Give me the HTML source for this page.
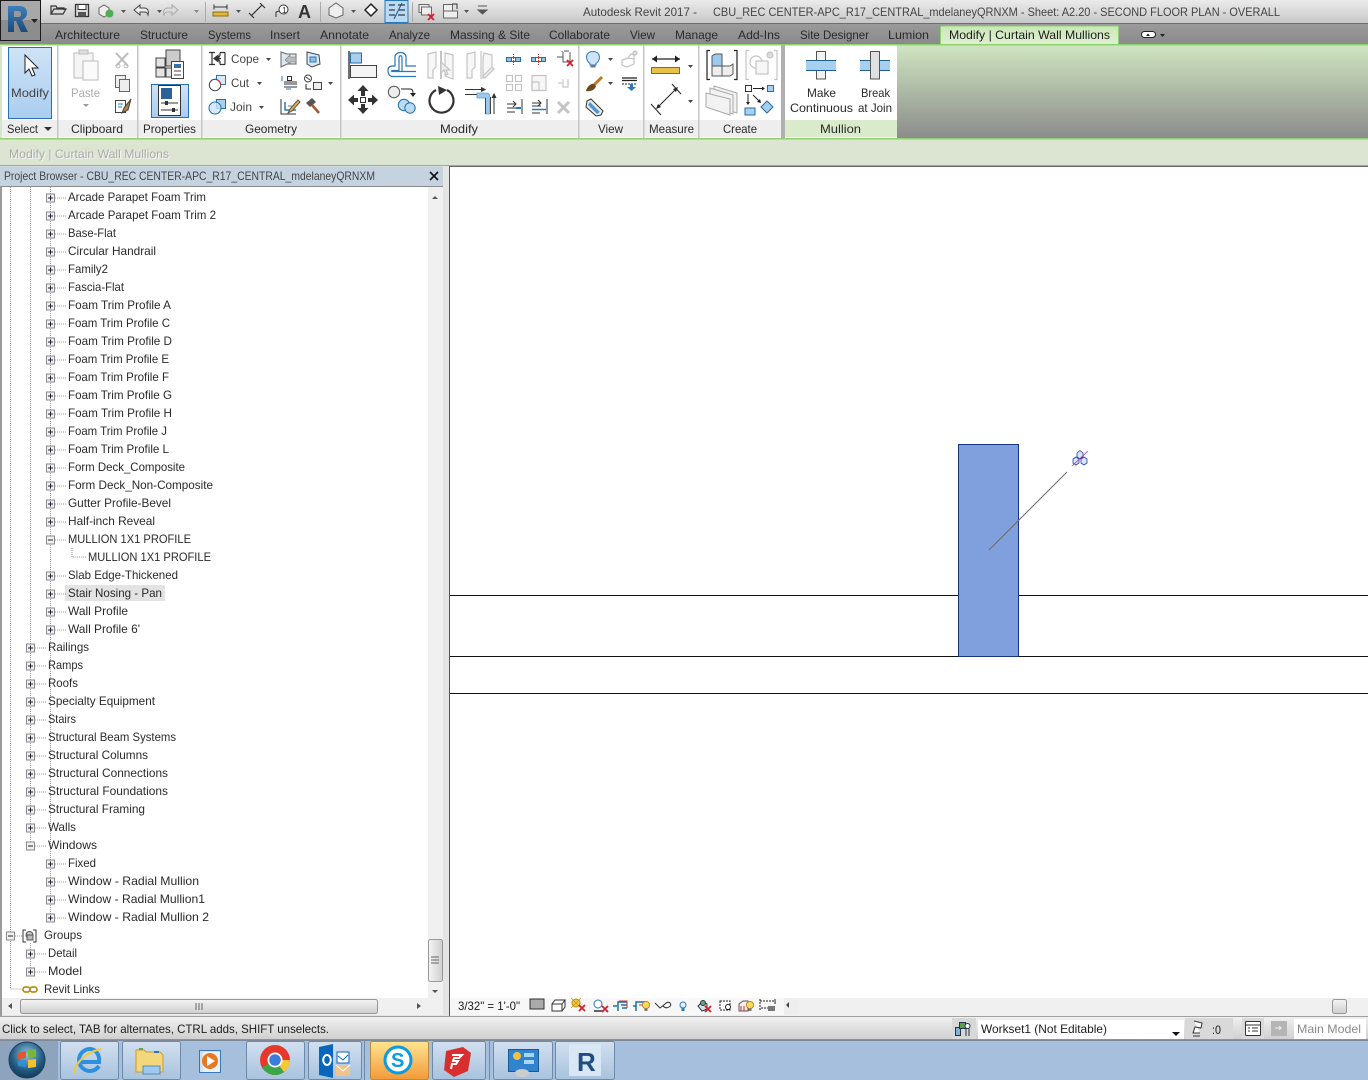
<!DOCTYPE html>
<html><head><meta charset="utf-8"><title>Revit</title>
<style>
html,body{margin:0;padding:0;background:#fff;width:1368px;height:1080px;overflow:hidden}
svg{display:block}
text{font-family:"Liberation Sans",sans-serif;font-size:12px;fill:#2a2a2a}
.t{fill:#1c1c1c}
.g{fill:#aaa}
.p{fill:#444}
.i{fill:none;stroke:#333;stroke-width:1.2}
.b{fill:#a9cfee;stroke:#1f6fa8;stroke-width:1}
.w{fill:#eee;stroke:#666;stroke-width:1}
.l{fill:none;stroke:#c4c4c4;stroke-width:1.2}
.d{stroke:#999;stroke-width:1;stroke-dasharray:1 1;fill:none}
</style></head><body>
<svg width="1368" height="1080" viewBox="0 0 1368 1080" xmlns="http://www.w3.org/2000/svg" shape-rendering="geometricPrecision">
<defs>
<linearGradient id="tb" x1="0" y1="0" x2="0" y2="1"><stop offset="0" stop-color="#ebebeb"/><stop offset="1" stop-color="#c6c6c6"/></linearGradient>
<linearGradient id="tab" x1="0" y1="0" x2="0" y2="1"><stop offset="0" stop-color="#9a9a9a"/><stop offset="1" stop-color="#8a8a8a"/></linearGradient>
<linearGradient id="rg" x1="0" y1="0" x2="0" y2="1"><stop offset="0" stop-color="#cfe5c0"/><stop offset="1" stop-color="#8c8c8c"/></linearGradient>
<linearGradient id="at" x1="0" y1="0" x2="0" y2="1"><stop offset="0" stop-color="#cbe6b8"/><stop offset="1" stop-color="#dff0d2"/></linearGradient>
<linearGradient id="st" x1="0" y1="0" x2="0" y2="1"><stop offset="0" stop-color="#f2f2f2"/><stop offset="1" stop-color="#cfcfcf"/></linearGradient>
<linearGradient id="rl" x1="0" y1="0" x2="0" y2="1"><stop offset="0" stop-color="#3f7fbd"/><stop offset="1" stop-color="#1c4a78"/></linearGradient>
<linearGradient id="sel" x1="0" y1="0" x2="0" y2="1"><stop offset="0" stop-color="#cfe3f6"/><stop offset="1" stop-color="#a9cdef"/></linearGradient>
<linearGradient id="btn" x1="0" y1="0" x2="0" y2="1"><stop offset="0" stop-color="#d2e0f0"/><stop offset="1" stop-color="#a8c2de"/></linearGradient>
<linearGradient id="sk" x1="0" y1="0" x2="0" y2="1"><stop offset="0" stop-color="#ffe58f"/><stop offset="1" stop-color="#f29a3a"/></linearGradient>
<linearGradient id="sb" x1="0" y1="0" x2="0" y2="1"><stop offset="0" stop-color="#f4f4f4"/><stop offset="1" stop-color="#cfcfcf"/></linearGradient>
<linearGradient id="sv" x1="0" y1="0" x2="1" y2="0"><stop offset="0" stop-color="#f4f4f4"/><stop offset="1" stop-color="#cfcfcf"/></linearGradient>
<radialGradient id="orb" cx=".5" cy=".35" r=".7"><stop offset="0" stop-color="#8fc4de"/><stop offset=".6" stop-color="#245d85"/><stop offset="1" stop-color="#0f3450"/></radialGradient>
<g id="pl"><rect x="0.5" y="0.5" width="8" height="8" fill="#f0f0f0" stroke="#8a8a8a"/><path d="M2 4.500h5M4.500 2v5" stroke="#223" fill="none"/></g>
<g id="mi"><rect x="0.5" y="0.5" width="8" height="8" fill="#f0f0f0" stroke="#8a8a8a"/><path d="M2 4.500h5" stroke="#223" fill="none"/></g>
<g id="x"><path d="M0 0l6 6M6 0l-6 6" stroke="#d3202a" stroke-width="1.8" fill="none"/></g>
<g id="bulb"><circle cx="4" cy="4" r="3.600" fill="#ffd75a" stroke="#a87b10" stroke-width=".8"/><rect x="2.500" y="7.500" width="3" height="2.500" fill="#777"/></g>
</defs>

<!-- title bar -->
<rect width="1368" height="24" fill="url(#tb)"/>
<rect y="23" width="1368" height="1" fill="#6f6f6f"/>
<rect y="24" width="1368" height="20" fill="url(#tab)"/>

<!-- application button -->
<rect x="0.5" y="0.5" width="40" height="40" fill="#8d8d8d" stroke="#1a1a1a"/>
<rect x="1" y="1" width="39" height="19" fill="#a8a8a8"/>
<path d="M8 6h11c6 0 8 3 8 7 0 3-2 6-5 7l6 12h-7l-5-11h-2v11H8z" fill="url(#rl)"/>
<path d="M14 11v6h4c2 0 3-1 3-3s-1-3-3-3z" fill="#999"/>
<path d="M31 19h7l-3.500 4z" fill="#222"/>

<!-- QAT icons -->
<path d="M51 14V6h5l1 2h7v2M51 14l3-5h12l-3 5z" class="i"/>
<g><rect x="75.500" y="4.500" width="13" height="12" fill="#ddd" stroke="#333" stroke-width="1.300"/><rect x="78" y="4.500" width="8" height="5" fill="#fff" stroke="#333"/><rect x="78" y="12" width="8" height="4.500" fill="#555"/></g>
<g><path d="M99 8l5-3 5 3v6l-5 3-5-3z" class="w"/><circle cx="109.500" cy="13.500" r="4" fill="#4caf50"/></g>
<path d="M121 10h5l-2.500 3z" fill="#555"/>
<path d="M134 10l6-5v3h4c4 0 5 3 4 7-1-3-2-3-4-3h-4v3z" fill="#eee" stroke="#444"/>
<path d="M157 10h5l-2.500 3z" fill="#555"/>
<path d="M178 10l-6-5v3h-4c-4 0-5 3-4 7 1-3 2-3 4-3h4v3z" fill="#ddd" stroke="#aaa"/>
<path d="M194 10h5l-2.500 3z" fill="#888"/>
<rect x="205" y="2" width="1" height="20" fill="#aaa"/>
<g><path d="M214 7h13M214 4.500v5M227 4.500v5" stroke="#333" fill="none"/><rect x="213" y="12" width="15" height="4" fill="#e0b93a" stroke="#8a6d10"/></g>
<path d="M236 10h5l-2.500 3z" fill="#555"/>
<g stroke="#333" fill="none" stroke-width="1.200"><path d="M251 16l11-11M249 13l5 5M260 3l5 5"/></g>
<g><circle cx="283.500" cy="9.500" r="4.500" fill="#fff" stroke="#333"/><path d="M279 11l-3 1v5" stroke="#333" fill="none"/><text x="282" y="13" style="font-size:8px">1</text></g>
<text x="298" y="18" style="font-size:18px;font-weight:bold;fill:#333">A</text>
<rect x="320" y="2" width="1" height="20" fill="#aaa"/>
<path d="M329 8l7-5 7 5v7l-7 3-7-3z" class="w"/>
<path d="M351 10h5l-2.500 3z" fill="#555"/>
<path d="M365 10l6-6 6 6-6 6z" fill="#fff" stroke="#222" stroke-width="1.500"/>
<rect x="385" y="0.500" width="23" height="22" fill="#bcd9f2" stroke="#2a78b8"/>
<path d="M389 5h6M389 10h6M389 15h6M398 5h7M399 10h6M398 15h7" stroke="#2c3e50" stroke-width="1.200" fill="none"/><path d="M394 19l8-16" stroke="#1c4f8a"/>
<rect x="412" y="2" width="1" height="20" fill="#aaa"/>
<g><rect x="419" y="4.500" width="10" height="8" class="w"/><rect x="421.500" y="7" width="10" height="8" class="w"/><use href="#x" x="428" y="14"/></g>
<g><rect x="443.500" y="4.500" width="9" height="7" class="w"/><rect x="443.500" y="11" width="14" height="7" class="w"/><path d="M452 4h5v5" stroke="#333" fill="none"/></g>
<path d="M464 10h5l-2.500 3z" fill="#555"/>
<path d="M478 6h9M478 10h9l-4.500 4z" fill="#555" stroke="#555"/>

<text x="583" y="16" textLength="114" lengthAdjust="spacingAndGlyphs" class="p">Autodesk Revit 2017 -</text>
<text x="713" y="16" textLength="567" lengthAdjust="spacingAndGlyphs" class="p">CBU_REC CENTER-APC_R17_CENTRAL_mdelaneyQRNXM - Sheet: A2.20 - SECOND FLOOR PLAN - OVERALL</text>

<!-- tabs -->
<g class="t">
<text x="55" y="39" textLength="65" lengthAdjust="spacingAndGlyphs">Architecture</text>
<text x="140" y="39" textLength="48" lengthAdjust="spacingAndGlyphs">Structure</text>
<text x="208" y="39" textLength="43" lengthAdjust="spacingAndGlyphs">Systems</text>
<text x="270" y="39" textLength="30" lengthAdjust="spacingAndGlyphs">Insert</text>
<text x="320" y="39" textLength="49" lengthAdjust="spacingAndGlyphs">Annotate</text>
<text x="389" y="39" textLength="41" lengthAdjust="spacingAndGlyphs">Analyze</text>
<text x="450" y="39" textLength="80" lengthAdjust="spacingAndGlyphs">Massing &amp; Site</text>
<text x="549" y="39" textLength="61" lengthAdjust="spacingAndGlyphs">Collaborate</text>
<text x="630" y="39" textLength="25" lengthAdjust="spacingAndGlyphs">View</text>
<text x="675" y="39" textLength="43" lengthAdjust="spacingAndGlyphs">Manage</text>
<text x="738" y="39" textLength="42" lengthAdjust="spacingAndGlyphs">Add-Ins</text>
<text x="800" y="39" textLength="69" lengthAdjust="spacingAndGlyphs">Site Designer</text>
<text x="888" y="39" textLength="41" lengthAdjust="spacingAndGlyphs">Lumion</text>
</g>
<path d="M940.500 45V27q0-1 1-1h176q1 0 1 1v18z" fill="url(#at)" stroke="#8fd070"/>
<text x="949" y="39" textLength="161" lengthAdjust="spacingAndGlyphs" class="t">Modify | Curtain Wall Mullions</text>
<rect x="1141.500" y="31.500" width="14" height="6" rx="3" fill="#fff" stroke="#222"/><path d="M1146 36h4l-2-2.500z" fill="#222"/><path d="M1160 34h5l-2.500 3z" fill="#222"/>

<!-- ribbon -->
<rect y="45" width="1368" height="93" fill="url(#rg)"/>
<rect y="44" width="1368" height="1.500" fill="#8fd070"/>
<rect y="138" width="1368" height="1.500" fill="#8fd070"/>
<rect x="0" y="45" width="2" height="93" fill="#d5e5ca"/>
<rect x="781" y="45" width="4" height="93" fill="#b0b0b0"/>
<rect x="2" y="45.500" width="779" height="92.500" fill="#fff"/>
<rect x="785" y="45.500" width="112" height="92.500" fill="#fff"/>
<rect x="2" y="120" width="779" height="17" fill="#eeeeee"/>
<rect x="785" y="120" width="112" height="17" fill="#d9ebca"/>
<g fill="#c6c6c6">
<rect x="57" y="45" width="1.500" height="93"/><rect x="137" y="45" width="1.500" height="93"/><rect x="201" y="45" width="1.500" height="93"/><rect x="340" y="45" width="1.500" height="93"/><rect x="578" y="45" width="1.500" height="93"/><rect x="643" y="45" width="1.500" height="93"/><rect x="698" y="45" width="1.500" height="93"/>
</g>

<!-- panel labels -->
<g class="p">
<text x="7" y="133" textLength="31" lengthAdjust="spacingAndGlyphs">Select</text>
<path d="M44 127h8l-4 4z" fill="#333"/>
<text x="71" y="133" textLength="52" lengthAdjust="spacingAndGlyphs">Clipboard</text>
<text x="143" y="133" textLength="53" lengthAdjust="spacingAndGlyphs">Properties</text>
<text x="245" y="133" textLength="52" lengthAdjust="spacingAndGlyphs">Geometry</text>
<text x="440" y="133" textLength="38" lengthAdjust="spacingAndGlyphs">Modify</text>
<text x="598" y="133" textLength="25" lengthAdjust="spacingAndGlyphs">View</text>
<text x="649" y="133" textLength="45" lengthAdjust="spacingAndGlyphs">Measure</text>
<text x="723" y="133" textLength="34" lengthAdjust="spacingAndGlyphs">Create</text>
<text x="820" y="133" textLength="41" lengthAdjust="spacingAndGlyphs">Mullion</text>
</g>

<!-- Select -->
<rect x="8.500" y="47.500" width="43" height="71" fill="url(#sel)" stroke="#2a6fb0"/>
<path d="M25 55v18l4-4 3 7 3-1-3-7h6z" fill="#fff" stroke="#222"/>
<text x="11" y="97" textLength="38" lengthAdjust="spacingAndGlyphs" class="p">Modify</text>

<!-- Clipboard -->
<g class="l"><rect x="74" y="53" width="19" height="25" fill="#f4f4f4"/><rect x="83" y="61" width="15" height="19" fill="#fafafa"/><rect x="79" y="50" width="9" height="4" fill="#ddd"/></g>
<text x="71" y="97" textLength="29" lengthAdjust="spacingAndGlyphs" class="g">Paste</text>
<path d="M83 104h6l-3 3z" fill="#999"/>
<path d="M116 53l12 13M128 53l-12 13" stroke="#bbb" stroke-width="2" fill="none"/>
<circle cx="118" cy="66" r="2" fill="none" stroke="#bbb"/><circle cx="126" cy="66" r="2" fill="none" stroke="#bbb"/>
<rect x="115.500" y="75.500" width="10" height="12" class="w"/><rect x="119.500" y="79.500" width="10" height="12" class="w"/>
<g><rect x="115.500" y="100.500" width="10" height="12" fill="#fff" stroke="#444"/><path d="M118 104h5M118 107h4" stroke="#2a78b8"/><path d="M131 99l-7 9-2 5 6-3z" fill="#b08040" stroke="#444"/></g>

<!-- Properties -->
<g stroke="#444" fill="#e4e4e4"><path d="M156 58h9v9h-9zM156 68h9v9h-9zM166 68h8v9h-8z"/><path d="M166 50h14v16h-14z" fill="#ccc"/></g>
<rect x="171.500" y="61.500" width="12" height="17" fill="#fff" stroke="#444"/><rect x="174" y="64" width="7" height="4" fill="#3a6ea5"/><path d="M174 71h7M174 75h7" stroke="#444"/>
<rect x="151.500" y="84.500" width="37" height="33" fill="url(#sel)" stroke="#2a6fb0"/>
<rect x="158.500" y="85.500" width="22" height="30" fill="#fff" stroke="#333"/>
<rect x="161" y="88" width="11" height="11" fill="#2f6198"/><path d="M161 103h17M161 110h17" stroke="#333"/><rect x="165" y="101" width="3" height="4" fill="#333"/><rect x="172" y="108" width="3" height="4" fill="#333"/>

<!-- Geometry -->
<g class="i"><path d="M209 52.500h6M212 52.500v12M209 64.500h6M220 52.500h5M220 64.500h5M220 52.500v3l-2 3 2 3v3M225 52.500v12M214 58.500h7"/><path d="M214 58.500l4-3v6z" fill="#333"/></g>
<text x="231" y="63" textLength="28" lengthAdjust="spacingAndGlyphs" class="p">Cope</text><path d="M266 58h5l-2.500 3z" fill="#444"/>
<g><rect x="216.500" y="75.500" width="9" height="9" fill="#d8e9f7" stroke="#2a78b8"/><circle cx="215" cy="85" r="5.700" fill="#fff" stroke="#444"/><path d="M216 79.500a5.500 5.500 0 0 1 4.500 5" stroke="#d3202a" fill="none"/></g>
<text x="231" y="87" textLength="18" lengthAdjust="spacingAndGlyphs" class="p">Cut</text><path d="M257 82h5l-2.500 3z" fill="#444"/>
<g><rect x="216.500" y="99.500" width="9" height="9" class="b"/><circle cx="215" cy="108" r="6" fill="#cfe3f6" fill-opacity=".8" stroke="#1f6fa8"/></g>
<text x="230" y="111" textLength="22" lengthAdjust="spacingAndGlyphs" class="p">Join</text><path d="M259 106h5l-2.500 3z" fill="#444"/>
<g><path d="M281 52l6 2h9v10h-9l-6 3z" fill="#dce9f5" stroke="#666"/><path d="M296 57h-6v-2l-5 5 5 4v-2h6z" fill="#bbb" stroke="#777" stroke-width=".6"/></g>
<path d="M307 52l12 3 1 9-8 3-5-3z" fill="#dce9f5" stroke="#444"/><rect x="310" y="57" width="6" height="5" fill="#8fbfe6" stroke="#2a78b8"/>
<g stroke="#333" fill="none"><rect x="287.500" y="76.500" width="4" height="4"/><path d="M284 82h13M284 84h13M284 87h13" stroke-width=".9"/><path d="M282 76v5" stroke="#2a78b8"/><path d="M286 89h5" stroke="#2a78b8"/></g>
<g><circle cx="308" cy="78.500" r="3.500" fill="#fff" stroke="#444"/><path d="M306 77l4 3" stroke="#444"/><rect x="313.500" y="82.500" width="8" height="7" fill="#eee" stroke="#444"/><path d="M306 84v5h5" stroke="#222" fill="none"/></g>
<path d="M328 82h5l-2.500 3z" fill="#444"/>
<g><path d="M281 99v15h15" stroke="#333" fill="none"/><path d="M285 102v8h11M289 106v0" stroke="#2a78b8" stroke-width="1.500" fill="none"/><path d="M288 106h8" stroke="#777"/><path d="M298 100l-8 9-2 4 4-2 8-9z" fill="#e8b23a" stroke="#555"/></g>
<g><path d="M306 103l6-5 4 4-6 5z" fill="#555"/><path d="M312 105l7 8" stroke="#a05a2c" stroke-width="2.500"/></g>

<!-- Modify icons row 1 -->
<g><path d="M349 51v28" stroke="#222" stroke-width="1.300"/><rect x="350.500" y="53" width="11" height="10" class="b"/><rect x="350.500" y="65.500" width="26" height="12" fill="#f4f4f4" stroke="#444"/></g>
<path d="M388 70c0-3 2-4 5-4h2v-9c0-6 11-6 11 0v9h10M416 76.500h-23c-3 0-5-2-5-6.500M393 71.500h23M393 71.500c-2 0-2-1 0-1h6V58c0-3 3-3 3 0v13" fill="none" stroke="#2a78b8" stroke-width="1.200"/>
<g class="l"><path d="M428 54l8-2v15l-3 3v8h-5z" fill="#f7f7f7"/><path d="M441 51v28" stroke-width="2"/><path d="M445 53l8 2v24l-8-3z" fill="#f7f7f7"/><path d="M441 62v11l3-3 2 5 2-1-2-4h4z" fill="#eee"/></g>
<g class="l"><path d="M467 54l8-2v15l-3 3v8h-5z" fill="#f7f7f7"/><path d="M481 51v28"/><path d="M484 53l8 2v14l-9 9v-20z" fill="#f7f7f7"/><path d="M483 76l9-9 2 2-9 9z" fill="#eee"/></g>
<!-- small top row -->
<g stroke="#1f6fa8" fill="#8fc3ea"><rect x="506.500" y="57.500" width="5" height="4"/><rect x="515.500" y="57.500" width="5" height="4"/><rect x="511.500" y="57.500" width="4" height="4" fill="#fff"/></g><path d="M513.500 54v11" stroke="#b33" stroke-dasharray="1 1"/>
<g stroke="#1f6fa8"><rect x="531.500" y="57.500" width="4" height="4" fill="#8fc3ea"/><rect x="541.500" y="57.500" width="4" height="4" fill="#8fc3ea"/><path d="M535 57.500h6M535 61.500h6" fill="none"/></g><path d="M538.500 54v11" stroke="#b33" stroke-dasharray="1 1"/>
<g><path d="M557 57h6M563 52v10h7V52M564 51h5M562 51v1" stroke="#555" fill="none"/><use href="#x" x="567" y="60"/></g>
<!-- row 2 small grid -->
<g class="l"><rect x="506.500" y="75.500" width="6" height="6"/><rect x="515.500" y="75.500" width="6" height="6"/><rect x="506.500" y="84.500" width="6" height="6"/><rect x="515.500" y="84.500" width="6" height="6"/></g>
<g class="l"><rect x="532" y="75.500" width="14" height="15" fill="#f6f6f6"/><rect x="532" y="82" width="7" height="8.500"/></g>
<path d="M558 83h4M563 79v8h5v-8" class="l"/>
<!-- move -->
<g fill="#333"><path d="M363 85l5.500 6H365v5h-4v-5h-3.500zM363 114l5.500-6H365v-4h-4v4h-3.500zM348 100l6-5.500v3.500h4v4h-4v3.500zM378 100l-6-5.500v3.500h-4v4h4v3.500z"/><rect x="360.500" y="97.500" width="5" height="5" fill="#fff" stroke="#333"/></g>
<!-- copy -->
<g><circle cx="394" cy="92" r="5.700" fill="#eee" stroke="#555"/><path d="M401 89h9q3 0 3 4" stroke="#222" fill="none"/><path d="M410 93h6l-3 4z" fill="#222"/><circle cx="404" cy="105" r="5.700" fill="#bcd9f2" stroke="#1f6fa8"/><circle cx="410" cy="108" r="5.200" fill="#bcd9f2" stroke="#1f6fa8"/></g>
<!-- rotate -->
<path d="M436 90a12 12 0 1 0 11 0" fill="none" stroke="#333" stroke-width="2.200"/><path d="M438 86l9 4-8 5z" fill="#333"/>
<!-- trim -->
<g fill="none" stroke="#333"><path d="M465 89.500h18M465 94.500h12"/><path d="M481 87.500l4 2-4 2" fill="#333"/><path d="M494 114V96"/><path d="M492 98l2-4 2 4" fill="#333"/></g>
<path d="M477 93h9q4 0 4 4v17h-4.500V98h-8.500z" fill="#9cc9ee" stroke="#5f9ccc" stroke-width=".8"/>
<path d="M485.500 98v16M490.500 97v17" stroke="#444"/>
<!-- row 3 small -->
<g stroke="#333" fill="none"><path d="M507 104h9M507 108h9M513 101l3 3-3 3M522 99v15M507 112h8"/><path d="M516 108h5" stroke="#2a78b8" stroke-width="2"/></g>
<g stroke="#333" fill="none"><path d="M532 103h9M532 106h9M538 100l3 3-3 3M547 99v15M532 113h8"/><path d="M532 109.500h14M532 112h0" stroke="#2a78b8" stroke-width="1.500"/></g>
<path d="M558 102l11 11M569 102l-11 11" stroke="#c4c4c4" stroke-width="3"/>

<!-- View panel -->
<g><path d="M593 51.500c-8 0-8 9-3 12v1.500h6v-1.500c5-3 5-12-3-12z" fill="#cfe3f6" stroke="#2a78b8"/><rect x="590.500" y="65" width="5" height="2.500" fill="#777"/></g>
<path d="M608 58h5l-2.500 3z" fill="#444"/>
<g class="l"><path d="M622 60l6-2 6 1v5l-7 3-5-2zM628 58l3-4 3 1v4"/><circle cx="635" cy="53" r="2" fill="#ddd"/></g>
<g><path d="M602 77l-8 8" stroke="#c07a20" stroke-width="3"/><path d="M594 84c-2-1-7 2-8 7 4 1 9-1 10-5z" fill="#6a4a20"/></g>
<path d="M608 82h5l-2.500 3z" fill="#444"/>
<g stroke="#222" fill="none"><path d="M622 78h15M622 80.500h15" stroke-width="1.300"/><path d="M622 84h15" stroke-dasharray="2 1"/></g><path d="M630 84h3v3h3l-4.500 4-4.500-4h3z" fill="#2a78b8"/>
<g><path d="M587 101l4-2 12 12-2 4-5 1-10-9z" fill="#eee" stroke="#333"/><path d="M590 102l10 10-3 2-9-9z" fill="#4f95d8"/></g>

<!-- Measure -->
<path d="M652 59h28" stroke="#222" fill="none" stroke-width="1.200"/><path d="M652 59l5-3.500v7zM680 59l-5-3.500v7z" fill="#222"/>
<rect x="651.500" y="67.500" width="28" height="6" fill="#e7c14a" stroke="#8a6d10"/>
<path d="M688 65h5l-2.500 3z" fill="#444"/>
<path d="M657 108l20-20M651 104l10 11M672 84l9 10" stroke="#222" fill="none"/>
<path d="M656 109l2-5 3 3zM678 87l-5 2 3 3z" fill="#222"/>
<path d="M688 100h5l-2.500 3z" fill="#444"/>

<!-- Create -->
<path d="M710 50.500h-3v29h3M734 50.500h3v29h-3" fill="none" stroke="#222" stroke-width="1.200"/>
<path d="M712 56l3-2h7v12h-10z" fill="#9cc9ee" stroke="#555"/><path d="M712 66h10v10h-10zM722 66h8l3-2v10l-3 2h-8z" fill="#eee" stroke="#555"/>
<g class="l"><path d="M749 50.500h-3v29h3M774 50.500h3v29h-3"/><circle cx="756" cy="62" r="6"/><rect x="756" y="61" width="12" height="13" fill="#f6f6f6"/><circle cx="770" cy="55" r="3" fill="#ddd"/></g>
<g fill="#f2f2f2" stroke="#aaa"><path d="M714 86l23 7v20l-23-7z"/><path d="M710 88l23 7v19l-23-7z"/><path d="M706 93v14l24 8V99z"/></g>
<rect x="745.500" y="85.500" width="6" height="6" fill="#fff" stroke="#333"/><path d="M753 88.500h10" stroke="#222"/><path d="M765 88.500l-3-2v4z" fill="#222"/><rect x="767.500" y="85.500" width="6" height="6" class="b"/>
<path d="M748 94v9M753 95l6 6" stroke="#222" fill="none"/><path d="M746 102h4l-2 3zM761 103l-4-1 3-3z" fill="#222"/>
<rect x="745" y="108" width="10" height="7" class="b"/><path d="M767 101l6 6-6 6-6-6z" class="b"/>

<!-- Mullion -->
<rect x="816.500" y="51.500" width="9" height="9" fill="#f2f2f2" stroke="#555"/><rect x="816.500" y="70" width="9" height="9" fill="#f2f2f2" stroke="#555"/>
<rect x="806" y="61" width="30" height="9" fill="#a9cfee"/><path d="M806 60.500h30M806 70.500h30" stroke="#1f5f90" fill="none"/>
<rect x="860" y="60.500" width="11" height="9.500" fill="#a9cfee"/><rect x="879" y="60.500" width="11" height="9.500" fill="#a9cfee"/><path d="M860 60.500h10M860 70.500h10M880 60.500h10M880 70.500h10" stroke="#1f5f90" fill="none"/>
<rect x="870.500" y="51.500" width="9" height="27.500" fill="#e0e0e0" stroke="#555"/>
<g class="p">
<text x="807" y="97" textLength="29" lengthAdjust="spacingAndGlyphs">Make</text>
<text x="790" y="112" textLength="63" lengthAdjust="spacingAndGlyphs">Continuous</text>
<text x="861" y="97" textLength="29" lengthAdjust="spacingAndGlyphs">Break</text>
<text x="858" y="112" textLength="34" lengthAdjust="spacingAndGlyphs">at Join</text>
</g>

<!-- options bar -->
<rect y="139.500" width="1368" height="26.500" fill="#dbe5d2"/>
<text x="10" y="159" textLength="160" lengthAdjust="spacingAndGlyphs" style="fill:#f5f5f5">Modify | Curtain Wall Mullions</text>
<text x="9" y="158" textLength="160" lengthAdjust="spacingAndGlyphs" class="g">Modify | Curtain Wall Mullions</text>
<rect y="165.500" width="1368" height="1.500" fill="#6a6a6a"/>

<!-- project browser -->
<rect x="0" y="166" width="449" height="850" fill="#e4e4e4"/>
<rect x="0" y="166.500" width="443" height="19.500" fill="#c5d3e1"/>
<text x="4" y="180" textLength="371" lengthAdjust="spacingAndGlyphs" class="p">Project Browser - CBU_REC CENTER-APC_R17_CENTRAL_mdelaneyQRNXM</text>
<path d="M430 172l8 8M438 172l-8 8" stroke="#111" stroke-width="1.600"/>
<rect x="0" y="186" width="2" height="830" fill="#9a9a9a"/>
<rect x="2" y="186" width="441" height="1" fill="#8a8a8a"/>
<rect x="2" y="187" width="426" height="811" fill="#fff"/>
<rect x="428" y="187" width="15" height="811" fill="#f0f0f0"/>
<rect x="428.500" y="939.500" width="14" height="42" rx="2" fill="url(#sv)" stroke="#979797"/>
<path d="M431 957h8M431 960h8M431 963h8" stroke="#666"/>
<path d="M432 199l3-3 3 3zM432 990h6l-3 3z" fill="#555"/>
<rect x="2" y="998" width="441" height="17" fill="#f0f0f0"/>
<rect x="20.500" y="999.500" width="357" height="14" rx="2" fill="url(#sb)" stroke="#979797"/>
<path d="M196 1003v7M199 1003v7M202 1003v7" stroke="#666"/>
<path d="M12 1003v6l-4-3zM417 1003v6l4-3z" fill="#555"/>

<!-- tree lines -->
<path class="d" d="M10.500 187V989M30.500 187V845M50.500 187V917M30.500 935V971M10.500 989H22"/>
<path class="d" d="M72 548V557H86"/>

<g id="tree">
<rect x="65" y="585" width="100" height="16" fill="#e3e3e3"/>
<path class="d" d="M55 198H66M55 216H66M55 234H66M55 252H66M55 270H66M55 288H66M55 306H66M55 324H66M55 342H66M55 360H66M55 378H66M55 396H66M55 414H66M55 432H66M55 450H66M55 468H66M55 486H66M55 504H66M55 522H66M55 540H66M55 576H66M55 594H66M55 612H66M55 630H66M55 864H66M55 882H66M55 900H66M55 918H66"/>
<path class="d" d="M35 648H46M35 666H46M35 684H46M35 702H46M35 720H46M35 738H46M35 756H46M35 774H46M35 792H46M35 810H46M35 828H46M35 846H46M35 954H46M35 972H46M15 936H22"/>
<use href="#pl" x="46" y="193.500"/><use href="#pl" x="46" y="211.500"/><use href="#pl" x="46" y="229.500"/><use href="#pl" x="46" y="247.500"/><use href="#pl" x="46" y="265.500"/><use href="#pl" x="46" y="283.500"/><use href="#pl" x="46" y="301.500"/><use href="#pl" x="46" y="319.500"/><use href="#pl" x="46" y="337.500"/><use href="#pl" x="46" y="355.500"/><use href="#pl" x="46" y="373.500"/><use href="#pl" x="46" y="391.500"/><use href="#pl" x="46" y="409.500"/><use href="#pl" x="46" y="427.500"/><use href="#pl" x="46" y="445.500"/><use href="#pl" x="46" y="463.500"/><use href="#pl" x="46" y="481.500"/><use href="#pl" x="46" y="499.500"/><use href="#pl" x="46" y="517.500"/><use href="#mi" x="46" y="535.500"/><use href="#pl" x="46" y="571.500"/><use href="#pl" x="46" y="589.500"/><use href="#pl" x="46" y="607.500"/><use href="#pl" x="46" y="625.500"/>
<use href="#pl" x="26" y="643.500"/><use href="#pl" x="26" y="661.500"/><use href="#pl" x="26" y="679.500"/><use href="#pl" x="26" y="697.500"/><use href="#pl" x="26" y="715.500"/><use href="#pl" x="26" y="733.500"/><use href="#pl" x="26" y="751.500"/><use href="#pl" x="26" y="769.500"/><use href="#pl" x="26" y="787.500"/><use href="#pl" x="26" y="805.500"/><use href="#pl" x="26" y="823.500"/><use href="#mi" x="26" y="841.500"/>
<use href="#pl" x="46" y="859.500"/><use href="#pl" x="46" y="877.500"/><use href="#pl" x="46" y="895.500"/><use href="#pl" x="46" y="913.500"/>
<use href="#mi" x="6" y="931.500"/><use href="#pl" x="26" y="949.500"/><use href="#pl" x="26" y="967.500"/>
<g class="t">
<text x="68" y="201" textLength="138" lengthAdjust="spacingAndGlyphs">Arcade Parapet Foam Trim</text>
<text x="68" y="219" textLength="148" lengthAdjust="spacingAndGlyphs">Arcade Parapet Foam Trim 2</text>
<text x="68" y="237" textLength="48" lengthAdjust="spacingAndGlyphs">Base-Flat</text>
<text x="68" y="255" textLength="88" lengthAdjust="spacingAndGlyphs">Circular Handrail</text>
<text x="68" y="273" textLength="40" lengthAdjust="spacingAndGlyphs">Family2</text>
<text x="68" y="291" textLength="56" lengthAdjust="spacingAndGlyphs">Fascia-Flat</text>
<text x="68" y="309" textLength="103" lengthAdjust="spacingAndGlyphs">Foam Trim Profile A</text>
<text x="68" y="327" textLength="102" lengthAdjust="spacingAndGlyphs">Foam Trim Profile C</text>
<text x="68" y="345" textLength="104" lengthAdjust="spacingAndGlyphs">Foam Trim Profile D</text>
<text x="68" y="363" textLength="101" lengthAdjust="spacingAndGlyphs">Foam Trim Profile E</text>
<text x="68" y="381" textLength="101" lengthAdjust="spacingAndGlyphs">Foam Trim Profile F</text>
<text x="68" y="399" textLength="104" lengthAdjust="spacingAndGlyphs">Foam Trim Profile G</text>
<text x="68" y="417" textLength="104" lengthAdjust="spacingAndGlyphs">Foam Trim Profile H</text>
<text x="68" y="435" textLength="99" lengthAdjust="spacingAndGlyphs">Foam Trim Profile J</text>
<text x="68" y="453" textLength="101" lengthAdjust="spacingAndGlyphs">Foam Trim Profile L</text>
<text x="68" y="471" textLength="117" lengthAdjust="spacingAndGlyphs">Form Deck_Composite</text>
<text x="68" y="489" textLength="145" lengthAdjust="spacingAndGlyphs">Form Deck_Non-Composite</text>
<text x="68" y="507" textLength="103" lengthAdjust="spacingAndGlyphs">Gutter Profile-Bevel</text>
<text x="68" y="525" textLength="87" lengthAdjust="spacingAndGlyphs">Half-inch Reveal</text>
<text x="68" y="543" textLength="123" lengthAdjust="spacingAndGlyphs">MULLION 1X1 PROFILE</text>
<text x="88" y="561" textLength="123" lengthAdjust="spacingAndGlyphs">MULLION 1X1 PROFILE</text>
<text x="68" y="579" textLength="110" lengthAdjust="spacingAndGlyphs">Slab Edge-Thickened</text>
<text x="68" y="597" textLength="94" lengthAdjust="spacingAndGlyphs">Stair Nosing - Pan</text>
<text x="68" y="615" textLength="60" lengthAdjust="spacingAndGlyphs">Wall Profile</text>
<text x="68" y="633" textLength="72" lengthAdjust="spacingAndGlyphs">Wall Profile 6'</text>
<text x="48" y="651" textLength="41" lengthAdjust="spacingAndGlyphs">Railings</text>
<text x="48" y="669" textLength="35" lengthAdjust="spacingAndGlyphs">Ramps</text>
<text x="48" y="687" textLength="30" lengthAdjust="spacingAndGlyphs">Roofs</text>
<text x="48" y="705" textLength="107" lengthAdjust="spacingAndGlyphs">Specialty Equipment</text>
<text x="48" y="723" textLength="28" lengthAdjust="spacingAndGlyphs">Stairs</text>
<text x="48" y="741" textLength="128" lengthAdjust="spacingAndGlyphs">Structural Beam Systems</text>
<text x="48" y="759" textLength="100" lengthAdjust="spacingAndGlyphs">Structural Columns</text>
<text x="48" y="777" textLength="120" lengthAdjust="spacingAndGlyphs">Structural Connections</text>
<text x="48" y="795" textLength="120" lengthAdjust="spacingAndGlyphs">Structural Foundations</text>
<text x="48" y="813" textLength="97" lengthAdjust="spacingAndGlyphs">Structural Framing</text>
<text x="48" y="831" textLength="28" lengthAdjust="spacingAndGlyphs">Walls</text>
<text x="48" y="849" textLength="49" lengthAdjust="spacingAndGlyphs">Windows</text>
<text x="68" y="867" textLength="28" lengthAdjust="spacingAndGlyphs">Fixed</text>
<text x="68" y="885" textLength="131" lengthAdjust="spacingAndGlyphs">Window - Radial Mullion</text>
<text x="68" y="903" textLength="137" lengthAdjust="spacingAndGlyphs">Window - Radial Mullion1</text>
<text x="68" y="921" textLength="141" lengthAdjust="spacingAndGlyphs">Window - Radial Mullion 2</text>
<text x="44" y="939" textLength="38" lengthAdjust="spacingAndGlyphs">Groups</text>
<text x="48" y="957" textLength="29" lengthAdjust="spacingAndGlyphs">Detail</text>
<text x="48" y="975" textLength="34" lengthAdjust="spacingAndGlyphs">Model</text>
<text x="44" y="993" textLength="56" lengthAdjust="spacingAndGlyphs">Revit Links</text>
</g>
<rect x="22" y="929" width="15" height="14" fill="#fff"/>
<path d="M26 930h-3v12h3M33 930h3v12h-3" fill="none" stroke="#333"/><circle cx="29.500" cy="935" r="3.500" fill="#ccc" stroke="#555"/><rect x="27" y="935" width="6" height="5" fill="#bbb" stroke="#555"/>
<g fill="none" stroke="#b8901a" stroke-width="1.800"><rect x="23" y="987" width="7" height="5" rx="2.500"/><rect x="30" y="987" width="7" height="5" rx="2.500"/></g>
</g>

<!-- view -->
<rect x="449" y="166" width="1" height="850" fill="#555"/>
<rect x="450" y="167" width="918" height="831" fill="#fff"/>
<path d="M450 595.500H1368M450 656.500H1368M450 693.500H1368" stroke="#111"/>
<rect x="958.500" y="444.500" width="60" height="212" fill="#809fdd" stroke="#16357f"/>
<path d="M989 550l78-78" stroke="#6a6a6a" fill="none"/>
<g stroke="#2a3fa0" stroke-width=".8" fill="#d8e6f8"><path d="M1077 453l3-2.500 3 2.500v4l-3 2-3-2z"/><path d="M1073 459l3-2 3 2v4l-3 2-3-2z"/><path d="M1081 459l3-2 3 2v4l-3 2-3-2z"/></g>
<path d="M1072 466l16-15" stroke="#b030c0" stroke-width=".8"/>

<!-- view control bar -->
<rect x="450" y="998" width="918" height="18" fill="#f0f0f0"/>
<rect x="450" y="998" width="342" height="17" fill="#f7f7f7"/>
<rect x="1332.500" y="999.500" width="14" height="14" rx="2" fill="url(#sb)" stroke="#979797"/>
<text x="458" y="1010" textLength="62" lengthAdjust="spacingAndGlyphs" class="t">3/32" = 1'-0"</text>
<g>
<rect x="530" y="999" width="14" height="10" fill="#aaa" stroke="#333"/>
<path d="M552 1004h10v7h-10zM552 1004l3-4h10l-3 4M562 1011l3-4v-7" fill="#fff" stroke="#333"/>
<circle cx="576" cy="1003" r="4" fill="#f5c842" stroke="#b8901a"/><path d="M571 998l10 10M581 998l-10 10" stroke="#b8901a" stroke-width=".7"/><use href="#x" x="579" y="1005"/>
<circle cx="598" cy="1004" r="4" fill="#fff" stroke="#2a78b8"/><path d="M594 1011h9" stroke="#333" stroke-width="1.500"/><use href="#x" x="602" y="1006"/>
<path d="M618 1011v-9h9M613 1006h4M622 1008h5M621 1005h6" stroke="#1f6fa8" fill="none" stroke-width="1.500"/><path d="M619 1001h8v7" stroke="#c33" fill="none"/>
<path d="M636 1011v-9h9M633 1006h3" stroke="#1f6fa8" fill="none" stroke-width="1.500"/><path d="M639 1005h6" stroke="#c33"/><use href="#bulb" x="642" y="1001"/>
<path d="M655 1003l5 5 5-4q3-3 5-1t-1 4q-3 2-6-1" stroke="#333" fill="none"/>
<circle cx="683" cy="1005" r="3" fill="#e9f2fb" stroke="#2a78b8"/><rect x="681.500" y="1008" width="3" height="3" fill="#2a78b8"/>
<path d="M698 1006l5-5 4 3v5l-5 2z" fill="#cfe3f6" stroke="#333"/><circle cx="703" cy="1003" r="2.500" fill="#5a8" stroke="#333"/><use href="#x" x="705" y="1006"/>
<rect x="720" y="1001" width="10" height="9" fill="#fff" stroke="#222" stroke-dasharray="2 1"/><circle cx="728" cy="1007" r="2.500" fill="#fff" stroke="#222"/>
<path d="M739 1011v-7l4-3h5v10z" fill="#eee" stroke="#555"/><path d="M741 1011v-5M744 1011v-5" stroke="#c33"/><use href="#bulb" x="746" y="1001"/>
<path d="M760 999v11M760 1001h14M761 1008h9" stroke="#222" stroke-dasharray="2 1" fill="none"/><path d="M775 999v5" stroke="#222"/><rect x="768" y="1006" width="7" height="5" fill="#777"/>
</g>
<rect x="784" y="998" width="14" height="17" fill="#eee"/><path d="M789 1002v6l-3-3z" fill="#444"/>

<!-- status bar -->
<rect y="1016" width="1368" height="24" fill="url(#st)"/>
<rect y="1016" width="1368" height="1" fill="#a0a0a0"/>
<rect y="1039.500" width="1368" height="1" fill="#555"/>
<text x="2" y="1033" textLength="327" lengthAdjust="spacingAndGlyphs" class="t">Click to select, TAB for alternates, CTRL adds, SHIFT unselects.</text>
<rect x="952" y="1018" width="24" height="21" fill="#d8d8d8"/>
<g><rect x="955.500" y="1027.500" width="5" height="8" fill="#7fb1dc" stroke="#234"/><rect x="959.500" y="1022.500" width="6" height="6" fill="#5aa14a" stroke="#234"/><path d="M966 1027v9M969 1027v9" stroke="#234"/><circle cx="967.500" cy="1026" r="2.500" fill="#fff" stroke="#234"/></g>
<rect x="978" y="1020" width="206" height="19" fill="#fff"/>
<text x="981" y="1033" textLength="126" lengthAdjust="spacingAndGlyphs" class="t">Workset1 (Not Editable)</text>
<path d="M1172 1032h8l-4 4z" fill="#111"/>
<rect x="1185" y="1018" width="48" height="21" fill="#d9d9d9"/>
<path d="M1194 1021l8 2-1 5-6-1-2 6h7M1193 1036h7" stroke="#333" fill="#fff"/>
<text x="1212" y="1034" textLength="9" lengthAdjust="spacingAndGlyphs" class="t">:0</text>
<rect x="1242" y="1018" width="22" height="21" fill="#d9d9d9"/>
<rect x="1245.500" y="1021.500" width="15" height="14" rx="1" fill="#fff" stroke="#333"/><path d="M1246 1025h14M1248 1028h2M1252 1028h6M1248 1031h2M1252 1031h6" stroke="#333"/>
<rect x="1271" y="1021" width="16" height="15" fill="#b5b5b5"/><path d="M1275 1028h6l-2-2m2 2l-2 2" stroke="#eee" fill="none"/>
<rect x="1294" y="1019" width="72" height="20" fill="#fff"/>
<text x="1297" y="1033" textLength="64" lengthAdjust="spacingAndGlyphs" style="fill:#8a8a8a">Main Model</text>

<!-- taskbar -->
<rect y="1040.500" width="1368" height="39.500" fill="#a6bfdc"/>
<rect x="0" y="1041" width="58" height="39" fill="#8ea4bd"/>
<circle cx="27" cy="1060" r="18" fill="url(#orb)" stroke="#1d3f5c"/>
<g><path d="M18 1053l8-2v7l-8 1z" fill="#e8552b"/><path d="M28 1050l8-1v8l-8 1z" fill="#79b73c"/><path d="M18 1061l8-1v7l-8-1z" fill="#2f8fd8"/><path d="M28 1060l8-1v8l-8 1z" fill="#f6c12f"/></g>
<g fill="url(#btn)" stroke="#6f8aa8">
<rect x="60.500" y="1041.500" width="58" height="38" rx="2"/>
<rect x="122.500" y="1041.500" width="58" height="38" rx="2"/>
<rect x="246.500" y="1041.500" width="58" height="38" rx="2"/>
<rect x="308.500" y="1041.500" width="53" height="38" rx="2"/>
<rect x="432.500" y="1041.500" width="53" height="38" rx="2"/>
<rect x="493.500" y="1041.500" width="59" height="38" rx="2"/>
<rect x="555.500" y="1041.500" width="59" height="38" rx="2"/>
</g>
<path d="M364.500 1041v39M489.500 1041v39" stroke="#6f8aa8"/>
<rect x="370.500" y="1041.500" width="58" height="38" rx="2" fill="url(#sk)" stroke="#b98a40"/>
<!-- IE -->
<g fill="none"><path d="M79 1062h20c1-8-4-13-9-13-6 0-11 5-11 11s5 11 11 11c4 0 7-2 9-5" stroke="#2d8fe0" stroke-width="4"/><path d="M75 1073c-2-6 8-20 26-24" stroke="#f2c93a" stroke-width="2"/></g>
<!-- Explorer -->
<path d="M136 1050h8l2 2h14l3 3v17h-27z" fill="#f3d77d" stroke="#c69c3a"/><rect x="139" y="1048" width="4" height="2" fill="#4caf50"/><rect x="154" y="1051" width="5" height="2" fill="#2a78b8"/><rect x="143" y="1066" width="17" height="8" fill="#9cc9ee" stroke="#5a8ab8"/>
<!-- WMP -->
<rect x="199.500" y="1050.500" width="21" height="22" fill="#cfe3f6" stroke="#3a78b5"/><rect x="203" y="1052" width="17" height="20" fill="#e9f2fb"/><circle cx="210" cy="1061" r="8" fill="#e9781e"/><path d="M207 1056l8 5-8 5z" fill="#fff"/>
<!-- Chrome -->
<circle cx="275" cy="1060" r="15" fill="#e8382c"/><path d="M275 1060l-13 7.500A15 15 0 0 0 284 1072z" fill="#3aa54a"/><path d="M275 1060l9 12A15 15 0 0 0 290 1060z" fill="#f7c937"/><circle cx="275" cy="1060" r="7.500" fill="#fff"/><circle cx="275" cy="1060" r="5.800" fill="#3b7ddd"/>
<!-- Outlook -->
<path d="M319 1047l14-3v34l-14-3z" fill="#0a66b8"/><ellipse cx="327" cy="1060" rx="3.800" ry="5" fill="none" stroke="#fff" stroke-width="2"/><rect x="337" y="1052" width="12" height="11" fill="#fff" stroke="#0a66b8"/><path d="M338 1056l5 4 5-5" stroke="#0a66b8" fill="none"/><rect x="336" y="1065" width="14" height="11" fill="#eec48a"/><path d="M336 1065l7 6 7-6" stroke="#fff" fill="none"/>
<!-- Skype -->
<circle cx="398" cy="1060" r="13" fill="#fff" stroke="#0a9be2" stroke-width="3"/><text x="391" y="1067" style="font-size:20px;font-weight:bold;fill:#0a9be2">S</text>
<!-- SketchUp -->
<path d="M446 1051l17-4 8 6-3 18-14 6-10-7z" fill="#d92e2e"/><path d="M452 1055h10l-3 3h-5l-1 3h5l-2 3h-4l-1 5" stroke="#fff" stroke-width="2" fill="none"/>
<!-- Control panel -->
<rect x="508.500" y="1049.500" width="30" height="22" fill="#2f83cf" stroke="#1a5a94"/><circle cx="517" cy="1056" r="4" fill="#f4c042"/><rect x="524" y="1053" width="10" height="4" fill="#a8d6f5"/><rect x="524" y="1060" width="10" height="4" fill="#a8d6f5"/><ellipse cx="522" cy="1073" rx="7" ry="4" fill="#ccc"/>
<!-- Revit -->
<rect x="569" y="1044" width="32" height="32" fill="#d9e7f4"/>
<text x="577" y="1071" style="font-size:26px;font-weight:bold;fill:#1f4e84">R</text>
</svg>
</body></html>
